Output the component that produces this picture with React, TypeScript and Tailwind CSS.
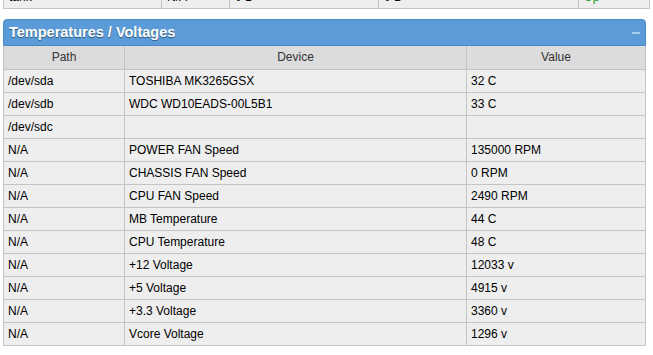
import React from 'react';

const rows: [string, string, string][] = [
  ['/dev/sda', 'TOSHIBA MK3265GSX', '32 C'],
  ['/dev/sdb', 'WDC WD10EADS-00L5B1', '33 C'],
  ['/dev/sdc', '', ''],
  ['N/A', 'POWER FAN Speed', '135000 RPM'],
  ['N/A', 'CHASSIS FAN Speed', '0 RPM'],
  ['N/A', 'CPU FAN Speed', '2490 RPM'],
  ['N/A', 'MB Temperature', '44 C'],
  ['N/A', 'CPU Temperature', '48 C'],
  ['N/A', '+12 Voltage', '12033 v'],
  ['N/A', '+5 Voltage', '4915 v'],
  ['N/A', '+3.3 Voltage', '3360 v'],
  ['N/A', 'Vcore Voltage', '1296 v'],
];

const App: React.FC = () => {
  return (
    <div className="w-[653px] h-[355px] bg-white overflow-hidden text-[12px] text-black font-['Liberation_Sans',Arial,sans-serif]">
      {/* tail of the table above */}
      <div className="h-[9px] overflow-hidden flex flex-col justify-end mx-[3px]">
        <div className="flex h-[23px] shrink-0 bg-[#eeeeee] border-b border-x border-[#c4c4c4] leading-[22px]">
          <div className="w-[157px] px-[5px]">tank</div>
          <div className="w-[68px] px-[5px] border-l border-[#c4c4c4]">N/A</div>
          <div className="w-[149px] px-[5px] border-l border-[#c4c4c4]">0 B</div>
          <div className="w-[200px] px-[5px] border-l border-[#c4c4c4]">0 B</div>
          <div className="flex-1 px-[5px] border-l border-[#c4c4c4] text-[#1a9a1a]">Up</div>
        </div>
      </div>

      <div className="mt-[10px] mx-[3px] w-[643px]">
        <div className="h-[27px] flex items-center justify-between pl-[5px] pr-[5px] bg-[#5b9bd7] border border-[#4a88c8] rounded-t-[4px]">
          <span className="text-white font-bold text-[14.5px] [text-shadow:0_1px_1px_rgba(0,0,0,0.45)]">
            Temperatures / Voltages
          </span>
          <span className="w-[8px] h-[2px] bg-[#a9cdef]" />
        </div>
        <table className="w-full border-collapse table-fixed">
          <colgroup>
            <col className="w-[121px]" />
            <col className="w-[342px]" />
            <col />
          </colgroup>
          <thead>
            <tr className="h-[23px] bg-[#dcdcdc] text-[#333333]">
              <th className="font-normal border border-[#c4c4c4] border-t-0">Path</th>
              <th className="font-normal border border-[#c4c4c4] border-t-0">Device</th>
              <th className="font-normal border border-[#c4c4c4] border-t-0">Value</th>
            </tr>
          </thead>
          <tbody>
            {rows.map((r, i) => (
              <tr key={i} className="h-[23px] bg-[#eeeeee]">
                <td className="border border-[#c4c4c4] px-[4px] leading-none">{r[0]}</td>
                <td className="border border-[#c4c4c4] px-[4px] leading-none">{r[1]}</td>
                <td className="border border-[#c4c4c4] px-[4px] leading-none">{r[2]}</td>
              </tr>
            ))}
          </tbody>
        </table>
      </div>
    </div>
  );
};

export default App;
